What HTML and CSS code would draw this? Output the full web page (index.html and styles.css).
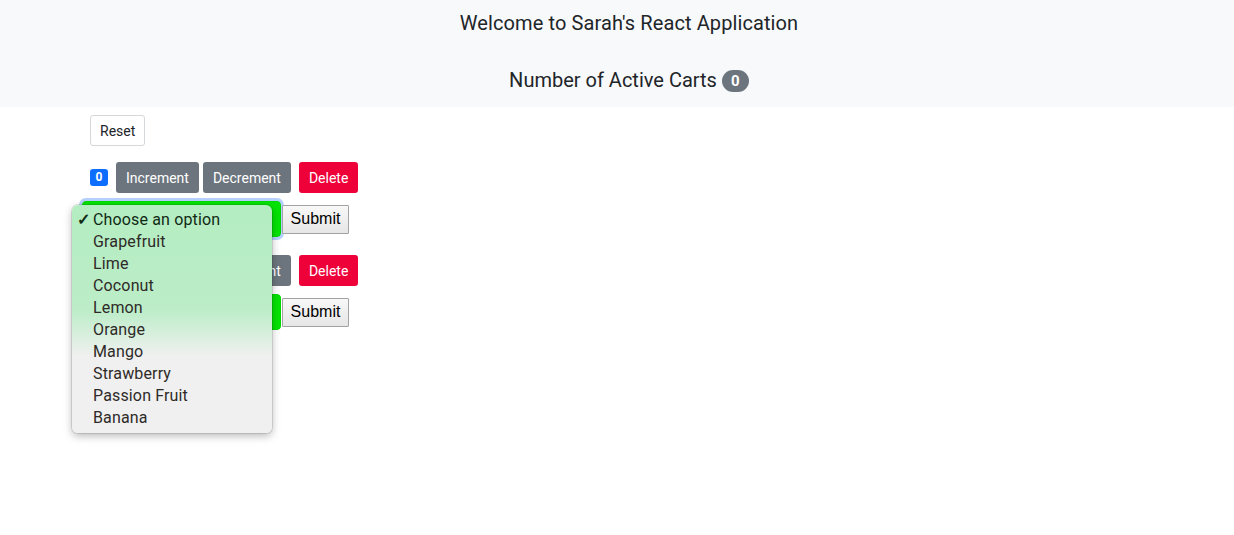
FILE: index.html
```html
<!DOCTYPE html>
<html lang="en">
<head>
<meta charset="utf-8">
<title>Sarah's React Application</title>
<link rel="stylesheet" href="styles.css">
</head>
<body>
<header class="top">
  <div class="title">Welcome to Sarah's React Application</div>
  <div class="carts">Number of Active Carts <span class="pill">0</span></div>
</header>
<main class="content">
  <button class="btn btn-light">Reset</button>

  <section class="counter">
    <div class="row-buttons">
      <span class="count">0</span>
      <button class="btn btn-gray">Increment</button>
      <button class="btn btn-gray">Decrement</button>
      <button class="btn btn-red">Delete</button>
    </div>
    <form class="row-select">
      <select class="fruit is-focused">
        <option>Choose an option</option>
        <option>Grapefruit</option>
        <option>Lime</option>
      </select><button type="button" class="submit">Submit</button>
    </form>
  </section>

  <section class="counter second">
    <div class="row-buttons">
      <span class="count">0</span>
      <button class="btn btn-gray">Increment</button>
      <button class="btn btn-gray">Decrement</button>
      <button class="btn btn-red">Delete</button>
    </div>
    <form class="row-select">
      <select class="fruit">
        <option>Choose an option</option>
      </select><button type="button" class="submit">Submit</button>
    </form>
  </section>

  <ul class="popup">
    <li class="selected"><span class="check">✓</span>Choose an option</li>
    <li>Grapefruit</li>
    <li>Lime</li>
    <li>Coconut</li>
    <li>Lemon</li>
    <li>Orange</li>
    <li>Mango</li>
    <li>Strawberry</li>
    <li>Passion Fruit</li>
    <li>Banana</li>
  </ul>
</main>
</body>
</html>
```

FILE: styles.css
```css
* { box-sizing: border-box; }

html, body { min-height: 535px; }

body {
  margin: 0;
  font-family: Roboto, "Noto Sans", sans-serif;
  color: #212529;
  background: #fff;
}

.top {
  background: #f8f9fa;
  text-align: center;
  padding: 11px 0 15px 24px;
  font-size: 20px;
  line-height: 24px;
}

.title {
  margin-bottom: 33px;
  letter-spacing: 0.1px;
}

.pill {
  display: inline-block;
  min-width: 27px;
  height: 22px;
  line-height: 22px;
  padding: 0 8px;
  border-radius: 11px;
  background: #6c757d;
  color: #fff;
  font-size: 15px;
  font-weight: 700;
  vertical-align: 1px;
}

.content {
  position: relative;
  min-height: 428px;
  padding: 8px 90px 0;
}

.btn {
  font-family: inherit;
  font-size: 14px;
  line-height: 21px;
  height: 31px;
  padding: 5px 9px 3px;
  border: 1px solid transparent;
  border-radius: 3px;
  cursor: pointer;
}

.btn-light {
  background: #fff;
  border-color: #d5d8db;
  color: #212529;
}

.btn-gray { background: #6c757d; color: #fff; }
.btn-red { background: #ee0038; color: #fff; margin-left: 4px; }

.counter { margin-top: 16px; }
.counter.second { margin-top: 18px; }

.row-buttons {
  display: flex;
  align-items: center;
  gap: 4px;
}

.count {
  display: inline-block;
  width: 18px;
  height: 17px;
  line-height: 17px;
  text-align: center;
  background: #0d6efd;
  color: #fff;
  font-size: 12px;
  font-weight: 700;
  border-radius: 3px;
  margin-right: 4px;
}

.row-select {
  display: flex;
  align-items: center;
  margin: 8px 0 0 -8px;
}

.fruit {
  appearance: none;
  -webkit-appearance: none;
  width: 199px;
  height: 36px;
  border: 1px solid #00d800;
  border-radius: 4px;
  background: #05e305;
  font-family: inherit;
  font-size: 16px;
  padding: 0 12px;
  color: #1b1b1b;
}

.fruit.is-focused {
  box-shadow: 0 0 0 3px rgba(120, 170, 250, 0.55);
}

.submit {
  margin-left: 1px;
  height: 29px;
  width: 67px;
  padding: 0;
  font-family: "Liberation Sans", Arial, sans-serif;
  font-size: 16px;
  color: #000;
  background: linear-gradient(#f8f8f8, #e6e6e6);
  border: 1px solid #a3a3a3;
  border-radius: 1px;
}

.popup {
  position: absolute;
  left: 72px;
  top: 98px;
  width: 200px;
  margin: 0;
  padding: 4px 0 4px;
  list-style: none;
  border-radius: 6px;
  background: linear-gradient(to bottom, #b4edc1 0%, #bcedc8 46%, #eff0ef 66%, #f0f0f0 100%);
  box-shadow: 0 0 0 1px rgba(0, 0, 0, 0.1), 0 3px 8px rgba(0, 0, 0, 0.28);
  font-size: 16px;
  line-height: 22px;
  color: #2e2a28;
  letter-spacing: 0.15px;
}

.popup li {
  position: relative;
  padding-left: 21px;
  height: 22px;
}

.popup li.selected { color: #102a14; }

.check {
  position: absolute;
  left: 5px;
  font-size: 16px;
  font-weight: 700;
}
```
